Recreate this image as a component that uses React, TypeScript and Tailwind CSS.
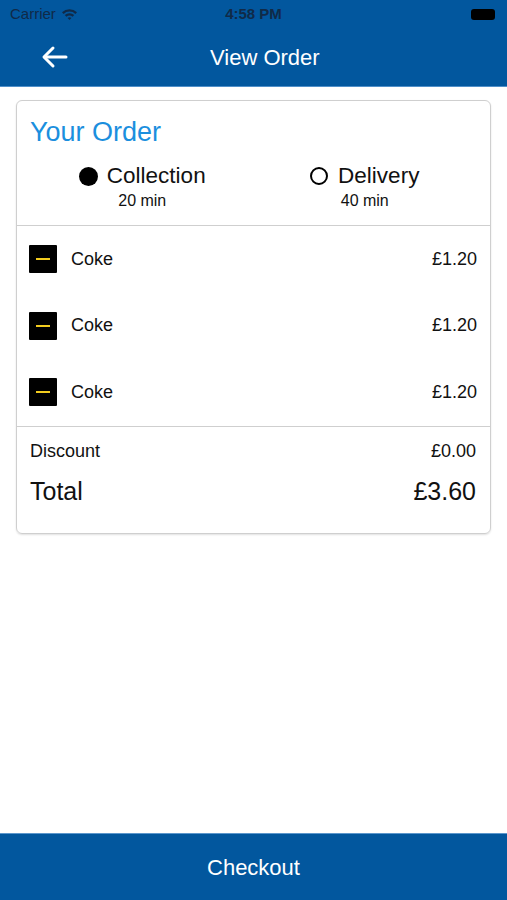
import React from "react";

const font = { fontFamily: '"Liberation Sans", Arial, sans-serif' };

function MinusIcon() {
  return (
    <div className="w-[28px] h-[28px] bg-black rounded-[1px] flex items-center justify-center shrink-0">
      <div className="w-[14px] h-[2px] bg-[#f2cc1f]" />
    </div>
  );
}

function ItemRow() {
  return (
    <div className="flex items-center h-[66.5px] pl-[12px] pr-[13px]">
      <MinusIcon />
      <span className="ml-[14px] text-[18px] text-[#111]">Coke</span>
      <span className="ml-auto text-[18px] text-[#111]">£1.20</span>
    </div>
  );
}

export default function App() {
  return (
    <div className="w-[507px] h-[900px] bg-white flex flex-col" style={font}>
      <div className="bg-[#02579e] h-[87px] flex flex-col border-b border-[#4f8fc9]">
        <div className="h-[28px] flex items-center px-[10px] relative">
          <div className="flex items-center gap-[5px]">
            <span className="text-[15px] text-[#102a48]">Carrier</span>
            <svg width="17" height="12" viewBox="0 0 17 12">
              <path d="M1 4.2 A11 11 0 0 1 16 4.2 L14.4 5.9 A8.7 8.7 0 0 0 2.6 5.9 Z" fill="#102a48" />
              <path d="M3.8 7.1 A7 7 0 0 1 13.2 7.1 L11.6 8.8 A4.7 4.7 0 0 0 5.4 8.8 Z" fill="#102a48" />
              <path d="M6.6 10 A3 3 0 0 1 10.4 10 L8.5 12 Z" fill="#102a48" />
            </svg>
          </div>
          <span className="absolute left-1/2 -translate-x-1/2 text-[15px] font-bold text-[#102a48]">4:58 PM</span>
          <div className="ml-auto mr-[2px] w-[24px] h-[11px] rounded-[3px] bg-black" />
        </div>
        <div className="flex-1 flex items-center relative">
          <svg className="ml-[41px]" width="28" height="24" viewBox="0 0 28 24" fill="none" stroke="white" strokeWidth="3" strokeLinecap="round" strokeLinejoin="round">
            <path d="M25 12 H4" />
            <path d="M12 3 L3 12 L12 21" />
          </svg>
          <span className="absolute left-[210px] text-[22px] text-white">View Order</span>
        </div>
      </div>

      <div className="px-[16px] pt-[13px]">
        <div className="border border-[#cfcfcf] rounded-[6px] shadow-[0_1px_2px_rgba(0,0,0,0.12)]">
          <div className="pt-[15px] pb-[13px]">
            <div className="pl-[13px] text-[27px] leading-[32px] text-[#1b8fde]">Your Order</div>
            <div className="flex mt-[16px]">
              <div className="flex-1 flex flex-col items-center ml-[14px]">
                <div className="flex items-center">
                  <div className="w-[19px] h-[19px] rounded-full bg-black" />
                  <span className="ml-[9px] text-[22.5px] leading-[24px] text-[#111]">Collection</span>
                </div>
                <span className="mt-[2px] text-[16px] leading-[22px] text-[#111]">20 min</span>
              </div>
              <div className="flex-1 flex flex-col items-center mr-[14px]">
                <div className="flex items-center">
                  <div className="w-[18px] h-[18px] rounded-full border-[2px] border-black" />
                  <span className="ml-[10px] text-[22.5px] leading-[24px] text-[#111]">Delivery</span>
                </div>
                <span className="mt-[2px] text-[16px] leading-[22px] text-[#111]">40 min</span>
              </div>
            </div>
          </div>
          <div className="border-t border-[#cfcfcf]">
            <ItemRow />
            <ItemRow />
            <ItemRow />
          </div>
          <div className="border-t border-[#cfcfcf] pl-[13px] pr-[14px] pt-[12px] pb-[26px]">
            <div className="flex items-center text-[18px] leading-[24px] text-[#111]">
              <span>Discount</span>
              <span className="ml-auto">£0.00</span>
            </div>
            <div className="flex items-center text-[25px] leading-[32px] text-[#111] mt-[12px]">
              <span>Total</span>
              <span className="ml-auto">£3.60</span>
            </div>
          </div>
        </div>
      </div>

      <div className="flex-1" />
      <div className="h-[67px] bg-[#02579e] border-t border-[#5c97cc] flex items-center justify-center">
        <span className="text-[22px] text-white">Checkout</span>
      </div>
    </div>
  );
}
